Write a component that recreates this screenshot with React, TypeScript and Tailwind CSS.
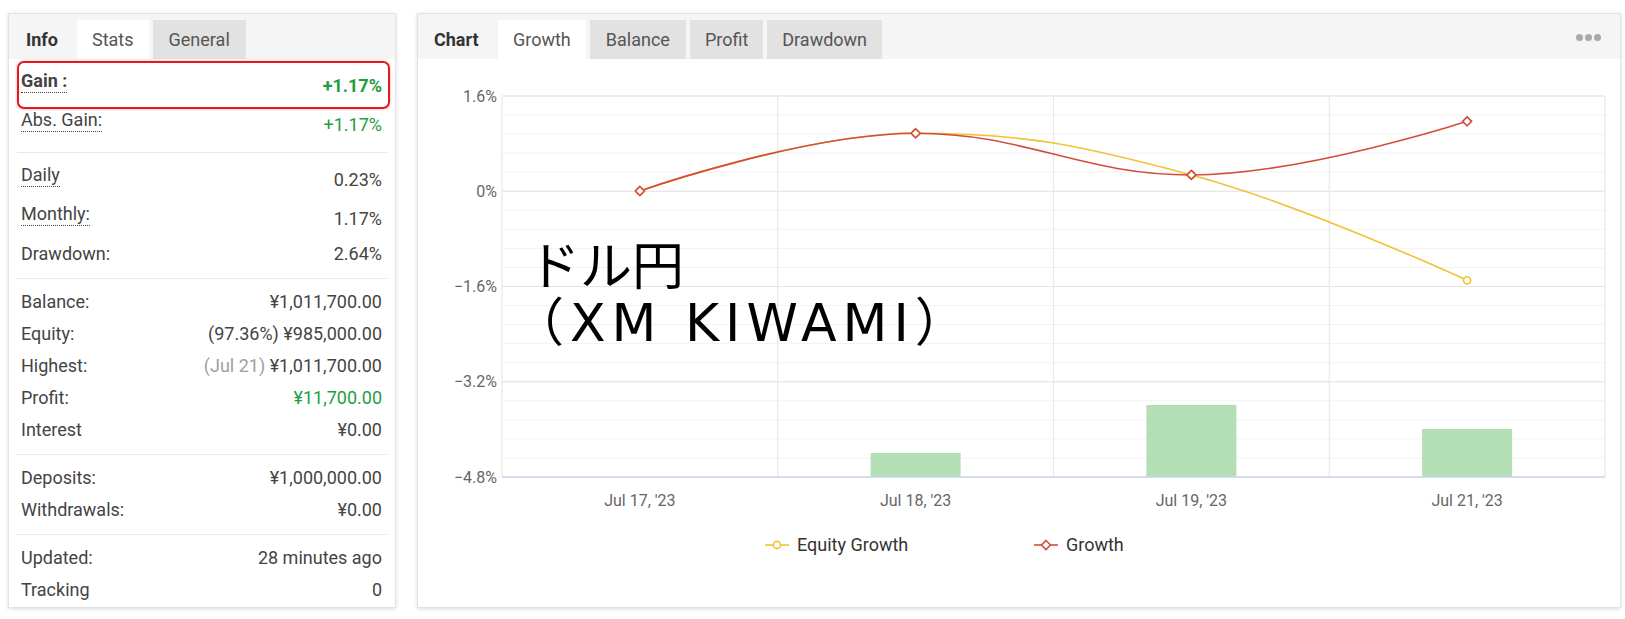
import React from 'react'

type Row = {
  label: string
  value: React.ReactNode
  dotted?: boolean
  bold?: boolean
  green?: boolean
}

const sections: Row[][] = [
  [
    { label: 'Gain :', value: '+1.17%', dotted: true, bold: true, green: true },
    { label: 'Abs. Gain:', value: '+1.17%', dotted: true, green: true },
  ],
  [
    { label: 'Daily', value: '0.23%', dotted: true },
    { label: 'Monthly:', value: '1.17%', dotted: true },
    { label: 'Drawdown:', value: '2.64%' },
  ],
  [
    { label: 'Balance:', value: '¥1,011,700.00' },
    { label: 'Equity:', value: '(97.36%) ¥985,000.00' },
    {
      label: 'Highest:',
      value: (
        <>
          <span className="text-[#a0a0a0]">(Jul 21)</span> ¥1,011,700.00
        </>
      ),
    },
    { label: 'Profit:', value: '¥11,700.00', green: true },
    { label: 'Interest', value: '¥0.00' },
  ],
  [
    { label: 'Deposits:', value: '¥1,000,000.00' },
    { label: 'Withdrawals:', value: '¥0.00' },
  ],
  [
    { label: 'Updated:', value: '28 minutes ago' },
    { label: 'Tracking', value: '0' },
  ],
]

const InfoPanel = () => (
  <div className="relative flex h-[595px] w-[388px] shrink-0 flex-col overflow-hidden border border-[#e3e3e3] bg-white shadow-[0_1px_4px_rgba(0,0,0,0.14)]">
    {/* tabs */}
    <div className="flex h-[45px] shrink-0 items-end bg-[#f5f5f5] text-[18px] text-[#555]">
      <div className="flex h-[39px] w-[68px] items-center pl-[17px] font-bold text-[#333]">Info</div>
      <div className="flex h-[39px] items-center bg-white px-[15px]">Stats</div>
      <div className="ml-[4px] flex h-[39px] items-center bg-[#e2e2e2] px-[16px]">General</div>
    </div>

    {sections.map((rows, si) => (
      <div
        key={si}
        className={`mx-[8px] shrink-0 pt-[7px] ${si < sections.length - 1 ? 'border-b border-[#e8e8e8] pb-[8px]' : ''}`}
      >
        {rows.map((r) => (
          <div
            key={r.label}
            className={`flex items-center justify-between pl-[4px] pr-[5px] text-[18px] ${r.dotted ? 'h-[39px]' : 'h-[32px]'}`}
          >
            <span
              className={`leading-[22px] text-[#444] ${r.dotted ? 'mb-[9px] border-b border-dotted border-[#444]' : ''} ${r.bold ? 'font-bold text-[#333]' : ''}`}
            >
              {r.label}
            </span>
            <span
              className={`leading-[22px] ${r.green ? 'text-[#1f9d3f]' : 'text-[#444]'} ${r.bold ? 'font-bold' : ''}`}
            >
              {r.value}
            </span>
          </div>
        ))}
      </div>
    ))}

    {/* highlight box round the Gain row */}
    <div className="absolute top-[47px] left-[8px] h-[48px] w-[373px] rounded-[7px] border-2 border-[#e4191c] shadow-[0_0_3px_rgba(200,0,0,0.35)]" />
  </div>
)

// chart geometry (svg coords)
const W = 1202
const H = 548
const L = 84
const R = 1187
const T = 37
const B = 418
const ZERO = 132
const PER = 59.53
const colW = (R - L) / 4
const cx = (i: number) => L + colW * (i + 0.5)
const yOf = (v: number) => ZERO - v * PER

const cats = ["Jul 17, '23", "Jul 18, '23", "Jul 19, '23", "Jul 21, '23"]
const growth = [0, 0.97, 0.27, 1.17]
const equity = [0, 0.97, 0.27, -1.5]
const bars = [null, 394, 346, 370]
const yLabels = ['1.6%', '0%', '−1.6%', '−3.2%', '−4.8%']

const RED = '#d24c3c'
const YELLOW = '#f1c232'

function splinePath(pts: [number, number][]) {
  const s = 1.5
  const d = 2.5
  const conts = pts.map(([x, y], i) => {
    if (i === 0 || i === pts.length - 1) return null
    const [lx, ly] = pts[i - 1]
    const [nx, ny] = pts[i + 1]
    const lcx = (s * x + lx) / d
    const rcx = (s * x + nx) / d
    let lcy = (s * y + ly) / d
    let rcy = (s * y + ny) / d
    const corr = ((rcy - lcy) * (rcx - x)) / (rcx - lcx) + y - rcy
    lcy += corr
    rcy += corr
    if (lcy > ly && lcy > y) {
      lcy = Math.max(ly, y)
      rcy = 2 * y - lcy
    } else if (lcy < ly && lcy < y) {
      lcy = Math.min(ly, y)
      rcy = 2 * y - lcy
    }
    if (rcy > ny && rcy > y) {
      rcy = Math.max(ny, y)
      lcy = 2 * y - rcy
    } else if (rcy < ny && rcy < y) {
      rcy = Math.min(ny, y)
      lcy = 2 * y - rcy
    }
    return { lcx, lcy, rcx, rcy }
  })
  let out = `M ${pts[0][0]} ${pts[0][1]}`
  for (let i = 1; i < pts.length; i++) {
    const prev = conts[i - 1]
    const cur = conts[i]
    const [px, py] = pts[i - 1]
    const [x, y] = pts[i]
    out += ` C ${prev ? prev.rcx : px} ${prev ? prev.rcy : py} ${cur ? cur.lcx : x} ${cur ? cur.lcy : y} ${x} ${y}`
  }
  return out
}

const Diamond = ({ x, y }: { x: number; y: number }) => (
  <path
    d={`M ${x} ${y - 4.5} L ${x + 4.5} ${y} L ${x} ${y + 4.5} L ${x - 4.5} ${y} Z`}
    fill="#fff"
    stroke={RED}
    strokeWidth={1.6}
  />
)

const Circle = ({ x, y }: { x: number; y: number }) => (
  <circle cx={x} cy={y} r={3.6} fill="#fff" stroke={YELLOW} strokeWidth={1.6} />
)

const GrowthChart = () => {
  const gPts = growth.map((v, i) => [cx(i), yOf(v)] as [number, number])
  const ePts = equity.map((v, i) => [cx(i), yOf(v)] as [number, number])
  const minor: number[] = []
  for (let k = 0; k <= 20; k++) minor.push(T + ((B - T) / 20) * k)

  return (
    <svg width={W} height={H} viewBox={`0 0 ${W} ${H}`} fontFamily="Roboto, sans-serif" className="shrink-0">
      {minor.map((y, k) => (
        <line key={`m${k}`} x1={L} x2={R} y1={y} y2={y} stroke="#f2f2f2" strokeWidth={1} />
      ))}
      {[0, 1, 2, 3, 4].map((k) => (
        <line key={`h${k}`} x1={L} x2={R} y1={T + ((B - T) / 4) * k} y2={T + ((B - T) / 4) * k} stroke="#e4e4e4" strokeWidth={1.2} />
      ))}
      {[0, 1, 2, 3, 4].map((k) => (
        <line key={`v${k}`} x1={L + colW * k} x2={L + colW * k} y1={T} y2={B} stroke="#e8e8e8" strokeWidth={1.2} />
      ))}
      {bars.map((top, i) =>
        top === null ? null : (
          <rect key={`b${i}`} x={cx(i) - 45} y={top} width={90} height={B - top} fill="#b4dfb6" />
        ),
      )}
      <line x1={L} x2={R} y1={B} y2={B} stroke="#ccd6eb" strokeWidth={1.5} />

      {yLabels.map((t, k) => (
        <text key={t} x={79} y={T + ((B - T) / 4) * k + 5.5} textAnchor="end" fontSize={16} fill="#666">
          {t}
        </text>
      ))}
      {cats.map((c, i) => (
        <text key={c} x={cx(i)} y={447} textAnchor="middle" fontSize={16} fill="#666">
          {c}
        </text>
      ))}

      <path d={splinePath(ePts)} fill="none" stroke={YELLOW} strokeWidth={1.6} />
      <path d={splinePath(gPts)} fill="none" stroke={RED} strokeWidth={1.6} />
      {ePts.map(([x, y], i) => (
        <Circle key={`e${i}`} x={x} y={y} />
      ))}
      {gPts.map(([x, y], i) => (
        <Diamond key={`g${i}`} x={x} y={y} />
      ))}

      {/* legend */}
      <line x1={347} x2={371} y1={486} y2={486} stroke={YELLOW} strokeWidth={1.6} />
      <Circle x={359} y={486} />
      <text x={379} y={492} fontSize={18} fill="#333">
        Equity Growth
      </text>
      <line x1={616} x2={640} y1={486} y2={486} stroke={RED} strokeWidth={1.6} />
      <Diamond x={628} y={486} />
      <text x={648} y={492} fontSize={18} fill="#333">
        Growth
      </text>
    </svg>
  )
}

const ChartPanel = () => (
  <div className="relative flex h-[595px] w-[1204px] shrink-0 flex-col overflow-hidden border border-[#e3e3e3] bg-white shadow-[0_1px_4px_rgba(0,0,0,0.14)]">
    <div className="flex h-[45px] shrink-0 items-end gap-[4px] bg-[#f5f5f5] pr-[19px] text-[18px] text-[#555]">
      <div className="flex h-[39px] w-[76px] items-center pl-[16px] font-bold text-[#333]">Chart</div>
      <div className="flex h-[39px] items-center bg-white px-[15px]">Growth</div>
      <div className="flex h-[39px] items-center bg-[#e2e2e2] px-[16px]">Balance</div>
      <div className="flex h-[39px] items-center bg-[#e2e2e2] px-[15px]">Profit</div>
      <div className="flex h-[39px] items-center bg-[#e2e2e2] px-[15px]">Drawdown</div>
      <div className="mb-[18px] ml-auto flex gap-[2px]">
        <span className="h-[7px] w-[7px] rounded-full bg-[#a9a9a9]" />
        <span className="h-[7px] w-[7px] rounded-full bg-[#a9a9a9]" />
        <span className="h-[7px] w-[7px] rounded-full bg-[#a9a9a9]" />
      </div>
    </div>
    <GrowthChart />

    {/* caption pasted over the chart */}
    <div className="absolute top-[225px] left-[110px] font-['DejaVu_Sans','Noto_Sans_CJK_JP',sans-serif] text-[52px] leading-[56px] text-black">
      <div>ドル円</div>
      <div className="-ml-[16px] tracking-[6px]">（XM KIWAMI）</div>
    </div>
  </div>
)

export default function App() {
  return (
    <div className="flex h-[619px] w-[1625px] gap-[21px] overflow-hidden bg-white pt-[13px] pl-[8px] font-['Roboto',sans-serif]">
      <InfoPanel />
      <ChartPanel />
    </div>
  )
}
